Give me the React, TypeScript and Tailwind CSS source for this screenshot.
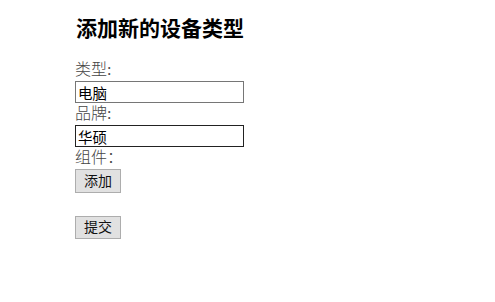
export default function App() {
  return (
    <div className="w-[495px] h-[302px] bg-white pl-[75px] pt-[16px] font-['Liberation_Serif','Noto_Sans_CJK_SC',serif] text-black">
      <h2 className="text-[21px] font-bold leading-[26px] mb-[17px] pl-[1px]">添加新的设备类型</h2>
      <form className="flex flex-col items-start">
        <label className="text-[16px] leading-[22px] text-[#444] font-light">类型:</label>
        <input
          defaultValue="电脑"
          className="w-[169px] h-[22px] border border-[#767676] px-[2px] text-[14.5px] text-black font-['Liberation_Sans','Noto_Sans_CJK_SC',sans-serif] outline-none"
        />
        <label className="text-[16px] leading-[22px] text-[#444] font-light">品牌:</label>
        <input
          defaultValue="华硕"
          className="w-[169px] h-[22px] border border-[#222] px-[2px] text-[14.5px] text-black font-['Liberation_Sans','Noto_Sans_CJK_SC',sans-serif] outline-none"
        />
        <label className="text-[16px] leading-[22px] text-[#444] font-light">组件：</label>
        <button
          type="button"
          className="w-[46px] h-[24px] border border-[#adadad] bg-[#e1e1e1] text-[14px] text-[#111] font-['Liberation_Sans','Noto_Sans_CJK_SC',sans-serif]"
        >
          添加
        </button>
        <button
          type="button"
          className="mt-[23px] w-[46px] h-[23px] border border-[#adadad] bg-[#e1e1e1] text-[14px] text-[#111] font-['Liberation_Sans','Noto_Sans_CJK_SC',sans-serif]"
        >
          提交
        </button>
      </form>
    </div>
  );
}
